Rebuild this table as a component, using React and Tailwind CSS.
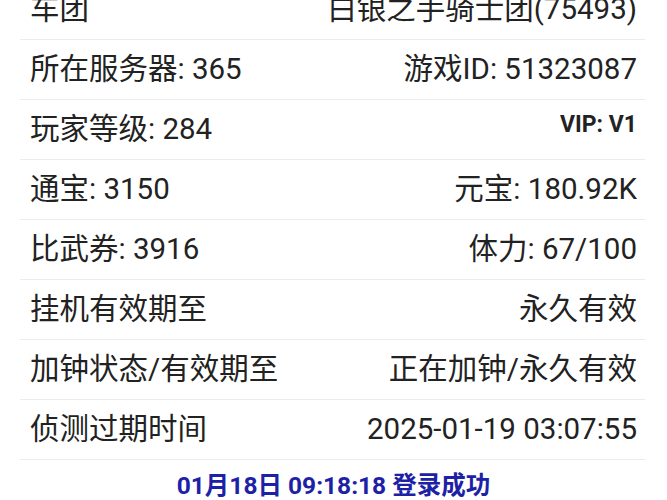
const rows = [
  { left: "车团", right: "白银之手骑士团(75493)" },
  { left: "所在服务器: 365", right: "游戏ID: 51323087" },
  { left: "玩家等级: 284", right: "VIP: V1", vip: true },
  { left: "通宝: 3150", right: "元宝: 180.92K" },
  { left: "比武券: 3916", right: "体力: 67/100" },
  { left: "挂机有效期至", right: "永久有效" },
  { left: "加钟状态/有效期至", right: "正在加钟/永久有效" },
  { left: "侦测过期时间", right: "2025-01-19 03:07:55" },
];

export default function App() {
  return (
    <div
      className="w-[667px] h-[500px] overflow-hidden bg-white text-[#222]"
      style={{ fontFamily: "Roboto, 'Noto Sans CJK SC', sans-serif" }}
    >
      <div className="-mt-[20px]">
        {rows.map((row, i) => (
          <div
            key={i}
            className="ml-5 mr-[22px] h-[60px] flex items-center justify-between pl-[10px] pr-[8px] border-b border-[#ececec]"
          >
            <span className="text-[29.5px] leading-none">{row.left}</span>
            {row.vip ? (
              <span className="text-[23px] font-bold leading-none mb-[10px]">{row.right}</span>
            ) : (
              <span className="text-[29.5px] leading-none">{row.right}</span>
            )}
          </div>
        ))}
      </div>
      <div className="h-[52px] flex items-center justify-center text-[24.5px] font-bold text-[#1d21a6]">
        01月18日 09:18:18 登录成功
      </div>
    </div>
  );
}
